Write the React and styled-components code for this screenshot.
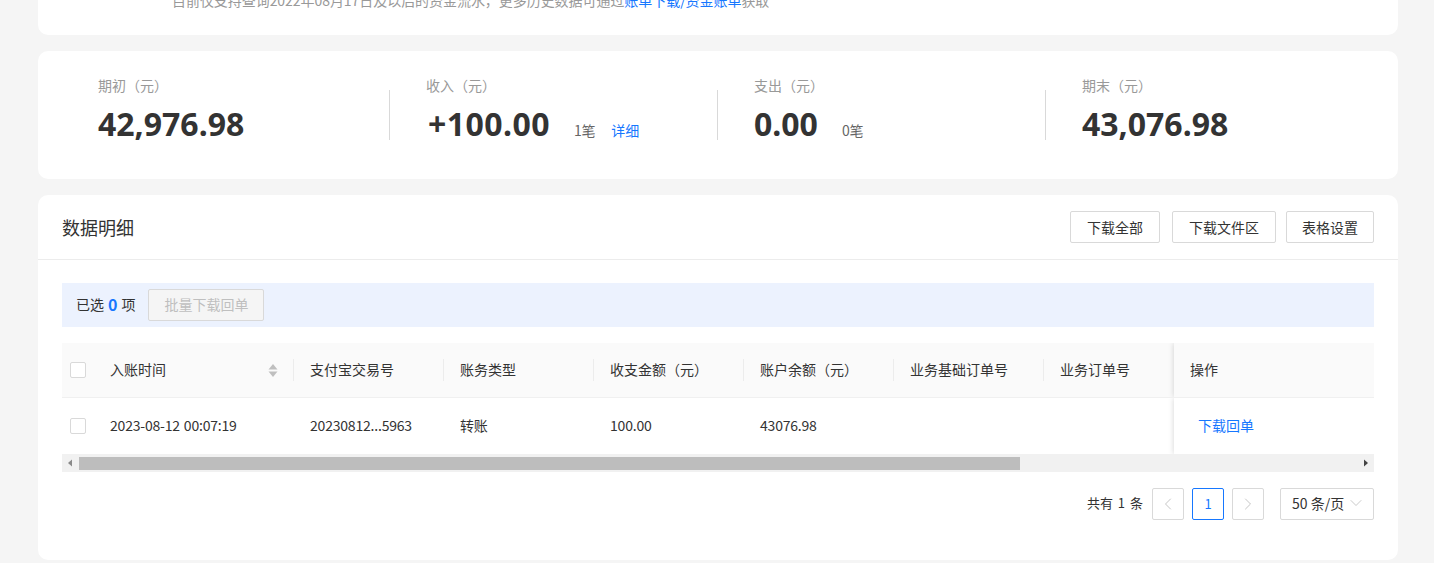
import React from 'react';
import styled, { createGlobalStyle } from 'styled-components';
import { ChevronDown, ChevronLeft, ChevronRight } from 'lucide-react';

const GlobalStyle = createGlobalStyle`
  html, body {
    margin: 0;
    height: 100%;
    overflow: hidden;
    background: #f5f5f5;
  }
  * {
    box-sizing: border-box;
  }
  body {
    font-family: "Noto Sans CJK SC", "Noto Sans", sans-serif;
    font-size: 14px;
    color: #333;
  }
`;

const Page = styled.div`
  display: flex;
  flex-direction: column;
  gap: 16px;
  padding: 0 36px 0 38px;
`;

const Card = styled.section`
  background: #fff;
  border-radius: 10px;
`;

const NoticeCard = styled(Card)`
  height: 35px;
  border-radius: 0 0 10px 10px;
  overflow: hidden;
  padding-left: 134px;
`;

const Notice = styled.p`
  margin: -11px 0 0;
  line-height: 22px;
  letter-spacing: -0.05px;
  color: #999;
`;

const TextLink = styled.a`
  color: #1677ff;
  text-decoration: none;
`;

const StatsCard = styled(Card)`
  height: 128px;
  padding: 24px;
  display: grid;
  grid-template-columns: repeat(4, 328px);
`;

const Stat = styled.div`
  padding: 0 36px;
  position: relative;

  & + &::before {
    content: '';
    position: absolute;
    left: -1px;
    top: 15px;
    width: 1px;
    height: 50px;
    background: #d9d9d9;
  }
`;

const StatLabel = styled.div`
  margin-top: -1px;
  line-height: 22px;
  color: #999;
`;

const StatLine = styled.div`
  display: flex;
  align-items: baseline;
  margin-top: 5px;
  height: 46px;
`;

const StatValue = styled.span`
  padding-left: ${(p) => (p.$signed ? 2 : 0)}px;
  font-family: "Noto Sans", "Noto Sans CJK SC", sans-serif;
  font-size: 32px;
  line-height: 46px;
  font-weight: 700;
  letter-spacing: ${(p) => (p.$signed ? '0.45px' : '0')};
  color: #333;
`;

const StatNote = styled.span`
  margin-left: 24px;
  letter-spacing: -0.3px;
  color: #666;
`;

const DetailLink = styled(TextLink)`
  margin-left: 16px;
`;

const DetailCard = styled(Card)`
  height: 365px;
`;

const DetailHeader = styled.header`
  height: 65px;
  padding: 0 24px;
  display: flex;
  align-items: center;
  justify-content: space-between;
  border-bottom: 1px solid #ececec;
`;

const DetailTitle = styled.h2`
  margin: 0;
  font-size: 18px;
  font-weight: 400;
  color: #333;
`;

const Toolbar = styled.div`
  display: flex;
`;

const Button = styled.button`
  width: ${(p) => p.$width}px;
  height: 32px;
  margin-left: ${(p) => p.$offset || 0}px;
  padding: 0;
  border: 1px solid #d9d9d9;
  border-radius: 2px;
  background: #fff;
  color: #333;
  font: inherit;
`;

const DetailBody = styled.div`
  padding: 23px 24px 0;
`;

const SelectionBar = styled.div`
  height: 44px;
  padding: 0 14px 2px;
  display: flex;
  align-items: center;
  background: #ecf2fe;
  color: #333;
`;

const SelectedCount = styled.b`
  margin: 0 4px;
  font-size: 16px;
  color: #1677ff;
`;

const BatchButton = styled.button`
  width: 116px;
  height: 32px;
  margin: 2px 0 0 13px;
  padding: 0 0 2px;
  border: 1px solid #d9d9d9;
  border-radius: 2px;
  background: #f5f5f5;
  color: #bfbfbf;
  font: inherit;
`;

const Table = styled.div`
  margin-top: 16px;
`;

const Row = styled.div`
  display: grid;
  grid-template-columns: 32px 200px 150px 150px 150px 150px 150px 130px 200px;
  align-items: center;
  height: ${(p) => (p.$head ? 55 : 56)}px;
  overflow: hidden;
  background: ${(p) => (p.$head ? '#fafafa' : '#fff')};
  border-bottom: ${(p) => (p.$head ? '1px solid #f0f0f0' : 'none')};
`;

const CheckCell = styled.div`
  padding-left: 8px;
  display: flex;
`;

const CheckBox = styled.span`
  width: 16px;
  height: 16px;
  border: 1px solid #d9d9d9;
  border-radius: 2px;
  background: #fff;
`;

const Cell = styled.div`
  padding: 0 0 2px 16px;
  display: flex;
  align-items: center;
  justify-content: space-between;
  position: relative;
  letter-spacing: ${(p) => (p.$data ? '-0.2px' : '0')};
  word-spacing: ${(p) => (p.$data ? '1px' : '0')};
  color: #333;
  white-space: nowrap;

  ${(p) =>
    p.$divider &&
    `&::after {
      content: '';
      position: absolute;
      right: 0;
      top: 50%;
      width: 1px;
      height: 22px;
      margin-top: -11px;
      background: #ececec;
    }`}
`;

const FixedCell = styled.div`
  height: 100%;
  padding: 0 0 2px ${(p) => (p.$action ? 24 : 16)}px;
  display: flex;
  align-items: center;
  background: ${(p) => (p.$action ? '#fff' : '#fafafa')};
  box-shadow: -1px 0 5px rgba(0, 0, 0, 0.13);
  color: #333;
`;

const SortIcon = styled.svg`
  width: 10px;
  height: 13px;
  margin: 2px 16px 0 0;
`;

const ScrollBar = styled.div`
  height: 18px;
  display: flex;
  align-items: center;
  background: #f1f1f1;
`;

const ScrollArrow = styled.svg`
  width: 17px;
  height: 10px;
  flex-shrink: 0;
`;

const ScrollThumb = styled.div`
  width: 941px;
  height: 13px;
  background: #bdbdbd;
`;

const ScrollSpace = styled.div`
  flex: 1;
`;

const Pagination = styled.nav`
  margin-top: 16px;
  display: flex;
  align-items: center;
  justify-content: flex-end;
`;

const Total = styled.span`
  margin: -3px 9px 0 0;
  font-size: 13px;
  word-spacing: 2px;
  color: #333;
`;

const PageBox = styled.span`
  width: 32px;
  height: 32px;
  margin-left: ${(p) => (p.$first ? 0 : 8)}px;
  padding-bottom: ${(p) => (p.$active ? 2 : 0)}px;
  display: flex;
  align-items: center;
  justify-content: center;
  border: 1px solid ${(p) => (p.$active ? '#1677ff' : '#d9d9d9')};
  border-radius: 2px;
  color: ${(p) => (p.$active ? '#1677ff' : '#bfbfbf')};
  font-size: 13px;
`;

const PageSize = styled.span`
  width: 94px;
  height: 32px;
  margin-left: 16px;
  padding: 0 10px 2px 11px;
  display: flex;
  align-items: center;
  justify-content: space-between;
  border: 1px solid #d9d9d9;
  border-radius: 2px;
  color: #333;
  white-space: nowrap;

  svg {
    color: #bfbfbf;
    flex-shrink: 0;
    margin: 0 -3px 0 -3px;
  }
`;

const headers = ['支付宝交易号', '账务类型', '收支金额（元）', '账户余额（元）', '业务基础订单号'];
const rowCells = ['20230812...5963', '转账', '100.00', '43076.98', ''];

const App = () => {
  return (
    <>
      <GlobalStyle />
      <Page>
        <NoticeCard>
          <Notice>
            目前仅支持查询2022年08月17日及以后的资金流水，更多历史数据可通过
            <TextLink href="#">账单下载/资金账单</TextLink>
            获取
          </Notice>
        </NoticeCard>

        <StatsCard>
          <Stat>
            <StatLabel>期初（元）</StatLabel>
            <StatLine>
              <StatValue>42,976.98</StatValue>
            </StatLine>
          </Stat>
          <Stat>
            <StatLabel>收入（元）</StatLabel>
            <StatLine>
              <StatValue $signed>+100.00</StatValue>
              <StatNote>1笔</StatNote>
              <DetailLink href="#">详细</DetailLink>
            </StatLine>
          </Stat>
          <Stat>
            <StatLabel>支出（元）</StatLabel>
            <StatLine>
              <StatValue>0.00</StatValue>
              <StatNote>0笔</StatNote>
            </StatLine>
          </Stat>
          <Stat>
            <StatLabel>期末（元）</StatLabel>
            <StatLine>
              <StatValue>43,076.98</StatValue>
            </StatLine>
          </Stat>
        </StatsCard>

        <DetailCard>
          <DetailHeader>
            <DetailTitle>数据明细</DetailTitle>
            <Toolbar>
              <Button $width={90}>下载全部</Button>
              <Button $width={104} $offset={12}>下载文件区</Button>
              <Button $width={88} $offset={10}>表格设置</Button>
            </Toolbar>
          </DetailHeader>

          <DetailBody>
            <SelectionBar>
              已选<SelectedCount>0</SelectedCount>项
              <BatchButton disabled>批量下载回单</BatchButton>
            </SelectionBar>

            <Table>
              <Row $head>
                <CheckCell><CheckBox /></CheckCell>
                <Cell $divider>
                  入账时间
                  <SortIcon viewBox="0 0 10 13">
                    <path d="M5 0 9.500 5.500H.5Z" fill="#bfbfbf" />
                    <path d="M5 13 9.500 7.500H.5Z" fill="#bfbfbf" />
                  </SortIcon>
                </Cell>
                {headers.map((h) => (
                  <Cell $divider key={h}>{h}</Cell>
                ))}
                <Cell>业务订单号</Cell>
                <FixedCell>操作</FixedCell>
              </Row>
              <Row>
                <CheckCell><CheckBox /></CheckCell>
                <Cell $data>2023-08-12 00:07:19</Cell>
                {rowCells.map((c, i) => (
                  <Cell $data key={i}>{c}</Cell>
                ))}
                <Cell />
                <FixedCell $action>
                  <TextLink href="#">下载回单</TextLink>
                </FixedCell>
              </Row>
              <ScrollBar>
                <ScrollArrow viewBox="0 0 17 10">
                  <path d="M6 5 10 1.500V8.500Z" fill="#8a8a8a" />
                </ScrollArrow>
                <ScrollThumb />
                <ScrollSpace />
                <ScrollArrow viewBox="0 0 17 10">
                  <path d="M11 5 7 1.500V8.500Z" fill="#444" />
                </ScrollArrow>
              </ScrollBar>
            </Table>

            <Pagination>
              <Total>共有 1 条</Total>
              <PageBox $first><ChevronLeft size={20} strokeWidth={1.1} /></PageBox>
              <PageBox $active>1</PageBox>
              <PageBox><ChevronRight size={20} strokeWidth={1.1} /></PageBox>
              <PageSize>
                50 条/页
                <ChevronDown size={20} strokeWidth={1} />
              </PageSize>
            </Pagination>
          </DetailBody>
        </DetailCard>
      </Page>
    </>
  );
};

export default App;
